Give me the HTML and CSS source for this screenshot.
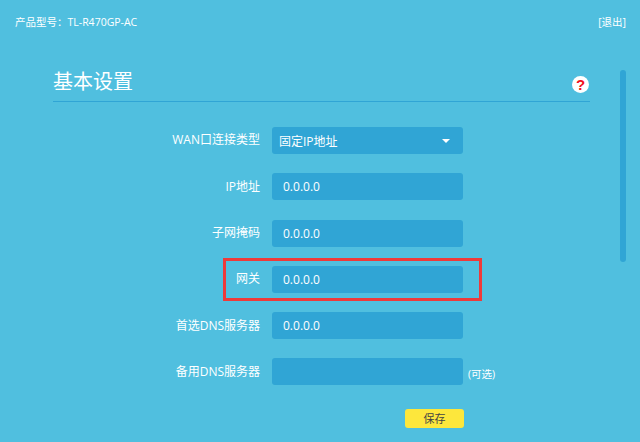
FILE: index.html
```html
<!DOCTYPE html>
<html lang="zh-CN">
<head>
  <meta charset="UTF-8" />
  <title>基本设置</title>
  <link rel="stylesheet" href="styles.css">
</head>
<body>

<div class="top-bar">
  <span>产品型号：TL-R470GP-AC</span>
  <a class="logout">[退出]</a>
</div>

<div class="main">
  <div class="panel">
    <div class="panel-head">
      <h2>基本设置</h2>
      <span class="help">?</span>
    </div>

    <form class="settings">
      <div class="row">
        <label class="raised">WAN口连接类型</label>
        <div class="field select">
          <span>固定IP地址</span>
          <i class="arrow"></i>
        </div>
      </div>
      <div class="row">
        <label>IP地址</label>
        <div class="field value">0.0.0.0</div>
      </div>
      <div class="row">
        <label>子网掩码</label>
        <div class="field value">0.0.0.0</div>
      </div>
      <div class="row highlighted">
        <label>网关</label>
        <div class="field value">0.0.0.0</div>
      </div>
      <div class="row">
        <label>首选DNS服务器</label>
        <div class="field value">0.0.0.0</div>
      </div>
      <div class="row">
        <label>备用DNS服务器</label>
        <div class="field value"></div>
        <span class="hint">(可选)</span>
      </div>
      <div class="actions">
        <button type="button">保存</button>
      </div>
    </form>
  </div>

  <div class="scrollbar"></div>
</div>

</body>
</html>
```

FILE: styles.css
```css
html, body {
  margin: 0;
  padding: 0;
  height: 442px;
  overflow: hidden;
  background: #50bfdf;
  color: #fff;
  font-family: "Open Sans", "Noto Sans CJK SC", sans-serif;
}

.top-bar {
  display: flex;
  justify-content: space-between;
  align-items: center;
  height: 14px;
  padding: 14px 14px 0 15px;
  font-size: 10.5px;
}

.main {
  display: flex;
  padding: 29px 14px 0 53px;
}

.panel {
  width: 537px;
}

.panel-head {
  display: flex;
  justify-content: space-between;
  align-items: flex-end;
  height: 45px;
  box-sizing: border-box;
  padding-right: 1px;
  border-bottom: 1px solid #30a5d5;
}

.panel-head h2 {
  margin: 0 0 5px;
  font-size: 20px;
  font-weight: 400;
  line-height: 28px;
}

.help {
  width: 17px;
  height: 17px;
  margin-bottom: 8px;
  border-radius: 50%;
  background: #fff;
  color: #f0101c;
  font-family: "Liberation Sans", sans-serif;
  font-size: 15px;
  font-weight: 700;
  line-height: 17px;
  text-align: center;
}

.settings {
  padding-top: 25px;
}

.row {
  position: relative;
  display: flex;
  align-items: center;
  height: 27px;
  margin-bottom: 19.3px;
}

.row label {
  width: 219px;
  margin-bottom: 2px;
  padding-right: 12px;
  box-sizing: border-box;
  font-size: 12px;
  text-align: right;
}

.row label.raised {
  margin-bottom: 3px;
}

.row.highlighted::after {
  content: "";
  position: absolute;
  left: 170px;
  top: -8px;
  width: 253px;
  height: 37px;
  border: 3px solid #ee3a3a;
}

.field {
  display: flex;
  justify-content: space-between;
  align-items: center;
  width: 191px;
  height: 27px;
  box-sizing: border-box;
  border-radius: 3px;
  background: #30a5d5;
}

.field.value {
  padding-left: 11px;
  font-size: 12px;
}

.field.select {
  padding: 0 13px 0 7px;
  font-size: 12px;
}

.arrow {
  width: 0;
  height: 0;
  border-left: 4px solid transparent;
  border-right: 4px solid transparent;
  border-top: 4px solid #fff;
}

.hint {
  margin: 3px 0 0 5px;
  font-size: 10.5px;
}

.actions {
  display: flex;
  justify-content: flex-end;
  width: 411px;
  padding-top: 4px;
}

.actions button {
  width: 59px;
  height: 19px;
  padding: 0;
  border: none;
  border-radius: 3px;
  background: #fde73c;
  color: #444;
  font-family: inherit;
  font-size: 11px;
}

.scrollbar {
  width: 6px;
  height: 192px;
  margin: 13px 0 0 30px;
  border-radius: 3px;
  background: #30a5d5;
}
```
